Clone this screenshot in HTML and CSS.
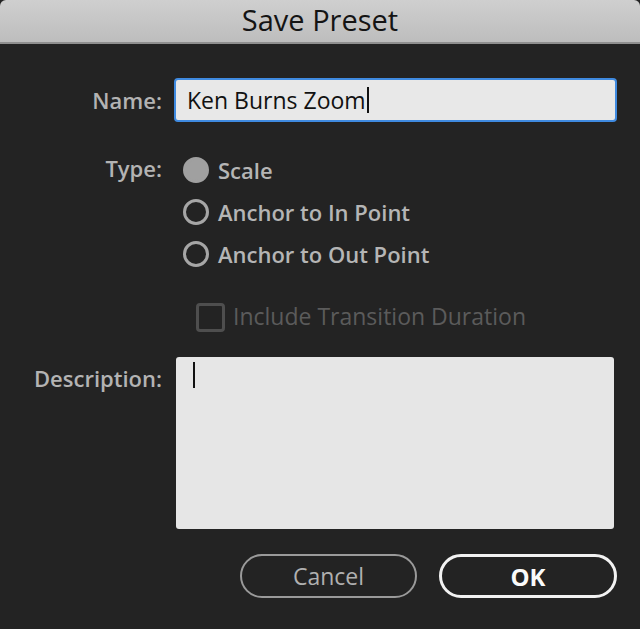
FILE: index.html
```html
<!DOCTYPE html>
<html>
<head>
<meta charset="utf-8">
<link rel="stylesheet" href="styles.css">
</head>
<body>
<div class="dialog">
  <div class="titlebar">Save Preset</div>
  <div class="content">
    <div class="row name-row">
      <div class="label">Name:</div>
      <div class="textfield"><span class="value">Ken Burns Zoom</span><span class="caret"></span></div>
    </div>
    <div class="row type-row">
      <div class="label type-label">Type:</div>
      <div class="radios">
        <div class="radio-item"><span class="radio checked"></span><span class="radio-text">Scale</span></div>
        <div class="radio-item"><span class="radio"></span><span class="radio-text">Anchor to In Point</span></div>
        <div class="radio-item"><span class="radio"></span><span class="radio-text">Anchor to Out Point</span></div>
      </div>
    </div>
    <div class="check-row">
      <span class="checkbox"></span><span class="check-text">Include Transition Duration</span>
    </div>
    <div class="row desc-row">
      <div class="label desc-label">Description:</div>
      <div class="textarea"><span class="caret tall"></span></div>
    </div>
    <div class="buttons">
      <div class="btn cancel">Cancel</div>
      <div class="btn ok">OK</div>
    </div>
  </div>
</div>
</body>
</html>
```
FILE: styles.css
```css
html, body {
  margin: 0;
  padding: 0;
  background: #232323;
}
.dialog {
  width: 640px;
  height: 629px;
  background: #232323;
  font-family: "Open Sans", "Noto Sans", sans-serif;
  overflow: hidden;
}
.titlebar {
  height: 42px;
  border-top-left-radius: 6px;
  border-top-right-radius: 6px;
  background: linear-gradient(#cfcfcf, #bdbdbd);
  border-bottom: 2px solid #8f8f8f;
  color: #141414;
  font-size: 29px;
  font-weight: 500;
  text-align: center;
  line-height: 40px;
}
.content {
  display: flex;
  flex-direction: column;
  padding-right: 23px;
}
.row {
  display: grid;
  grid-template-columns: 162px 1fr;
  column-gap: 12px;
}
.label {
  text-align: right;
  color: #b3b3b3;
  font-size: 22px;
  font-weight: 600;
}
.name-row {
  margin-top: 34px;
  align-items: center;
}
.textfield {
  height: 40px;
  border: 2px solid #3f8ae0;
  border-radius: 4px;
  background: #e8e8e8;
  display: flex;
  align-items: center;
  padding-left: 11px;
  color: #111;
  font-size: 23px;
}
.caret {
  display: inline-block;
  width: 2px;
  height: 26px;
  background: #111;
  margin-left: 1px;
}
.type-row {
  margin-top: 27px;
}
.type-label {
  line-height: 38px;
}
.radios {
  display: flex;
  flex-direction: column;
  padding-left: 9px;
}
.radio-item {
  height: 42px;
  display: flex;
  align-items: center;
  gap: 9px;
}
.radio {
  width: 26px;
  height: 26px;
  border-radius: 50%;
  box-sizing: border-box;
  border: 3px solid #a6a6a6;
}
.radio.checked {
  background: #a0a0a0;
  border-color: #a0a0a0;
}
.radio-text {
  color: #b5b5b5;
  font-size: 22px;
  font-weight: 600;
}
.check-row {
  margin-top: 28px;
  margin-left: 196px;
  display: flex;
  align-items: center;
  gap: 8px;
  height: 29px;
}
.checkbox {
  width: 29px;
  height: 29px;
  box-sizing: border-box;
  border: 3px solid #4e4e4e;
  border-radius: 4px;
}
.check-text {
  color: #5b5b5b;
  font-size: 23px;
  font-weight: 500;
  line-height: 1;
  margin-top: -3px;
}
.desc-row {
  margin-top: 25px;
}
.desc-label {
  padding-top: 6px;
}
.textarea {
  margin-left: 2px;
  margin-right: 3px;
  height: 172px;
  background: #e6e6e6;
  border-radius: 3px;
  padding: 5px 0 0 17px;
  box-sizing: border-box;
}
.caret.tall {
  height: 26px;
  margin: 0;
}
.buttons {
  margin-top: 25px;
  display: flex;
  justify-content: flex-end;
  gap: 22px;
}
.btn {
  height: 44px;
  box-sizing: border-box;
  border-radius: 22px;
  display: flex;
  align-items: center;
  justify-content: center;
}
.cancel {
  width: 177px;
  border: 2px solid #9a9a9a;
  color: #b0b0b0;
  font-size: 23px;
  font-weight: 500;
}
.ok {
  width: 178px;
  border: 3px solid #f2f2f2;
  color: #fafafa;
  font-size: 24px;
  font-weight: 700;
}
```
